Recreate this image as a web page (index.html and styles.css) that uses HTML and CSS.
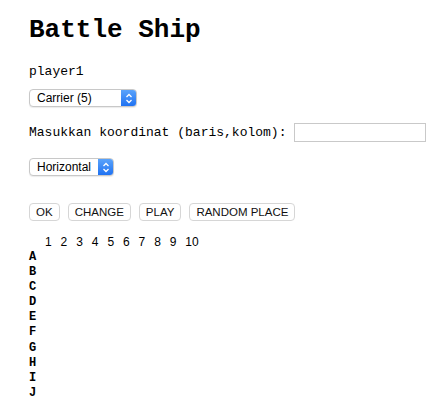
FILE: index.html
```html
<!DOCTYPE html>
<html>
<head>
<meta charset="utf-8">
<link rel="stylesheet" href="styles.css">
</head>
<body>
<div class="page">
  <h1 class="title">Battle Ship</h1>
  <p class="player">player1</p>
  <div class="row">
    <span class="select sel-ship"><span class="sel-text">Carrier (5)</span><span class="sel-arrow"><svg width="8" height="11" viewBox="0 0 8 11"><path d="M1.5 4 L4 1.5 L6.5 4 M1.5 7 L4 9.5 L6.5 7" fill="none" stroke="#fff" stroke-width="1.3"/></svg></span></span>
  </div>
  <div class="row coord">
    <label class="coord-label">Masukkan koordinat (baris,kolom):</label>
    <input class="coord-input" type="text">
  </div>
  <div class="row">
    <span class="select sel-dir"><span class="sel-text">Horizontal</span><span class="sel-arrow"><svg width="8" height="11" viewBox="0 0 8 11"><path d="M1.5 4 L4 1.5 L6.5 4 M1.5 7 L4 9.5 L6.5 7" fill="none" stroke="#fff" stroke-width="1.3"/></svg></span></span>
  </div>
  <div class="buttons">
    <button class="btn">OK</button>
    <button class="btn">CHANGE</button>
    <button class="btn">PLAY</button>
    <button class="btn">RANDOM PLACE</button>
  </div>
  <div class="board">
    <div class="head">
      <span class="corner"></span>
      <span class="num">1</span><span class="num">2</span><span class="num">3</span><span class="num">4</span><span class="num">5</span><span class="num">6</span><span class="num">7</span><span class="num">8</span><span class="num">9</span><span class="num">10</span>
    </div>
    <div class="letter">A</div>
    <div class="letter">B</div>
    <div class="letter">C</div>
    <div class="letter">D</div>
    <div class="letter">E</div>
    <div class="letter">F</div>
    <div class="letter">G</div>
    <div class="letter">H</div>
    <div class="letter">I</div>
    <div class="letter">J</div>
  </div>
</div>
</body>
</html>
```
FILE: styles.css
```css
html, body {
  margin: 0;
  padding: 0;
  background: #fff;
}
.page {
  padding: 14px 0 0 29px;
  font-family: "Liberation Mono", "Courier New", monospace;
  color: #000;
}
.title {
  margin: 0;
  font-size: 26px;
  font-weight: bold;
  line-height: 32px;
}
.player {
  margin: 18px 0 0;
  font-size: 13px;
  line-height: 16px;
}
.row {
  display: flex;
  align-items: center;
}
.select {
  margin-top: 9px;
  display: inline-flex;
  height: 18px;
  box-sizing: border-box;
  border: 1px solid #c8c8c8;
  border-radius: 4px;
  background: #fff;
  font-family: "Liberation Sans", Arial, sans-serif;
  font-size: 12px;
  overflow: hidden;
  box-shadow: 0 1px 1px rgba(0,0,0,0.08);
}
.sel-ship { width: 108px; }
.sel-dir { width: 85px; margin-top: 16px; }
.sel-text {
  flex: 1;
  padding-left: 7px;
  line-height: 16px;
}
.sel-arrow {
  width: 15px;
  background: linear-gradient(#5aa3fb, #1f72f2);
  display: flex;
  align-items: center;
  justify-content: center;
}
.coord {
  margin-top: 16px;
  gap: 8px;
}
.coord-label {
  font-size: 13px;
  line-height: 16px;
}
.coord-input {
  width: 132px;
  height: 19px;
  box-sizing: border-box;
  border: 1px solid #c9c9c9;
  margin: 0;
  padding: 0 3px;
}
.buttons {
  margin-top: 27px;
  display: flex;
  gap: 8px;
}
.btn {
  height: 18px;
  padding: 0 6px;
  margin: 0;
  border: 1px solid #d6d6d6;
  border-radius: 4px;
  background: #fff;
  font-family: "Liberation Sans", Arial, sans-serif;
  font-size: 11.5px;
  color: #111;
  line-height: 16px;
}
.board {
  margin-top: 14px;
}
.head {
  display: flex;
  font-family: "Liberation Sans", Arial, sans-serif;
  font-size: 12px;
  line-height: 15px;
}
.corner { width: 16px; }
.num { width: 15.6px; }
.letter {
  font-size: 12px;
  font-weight: bold;
  line-height: 15.1px;
}
```
